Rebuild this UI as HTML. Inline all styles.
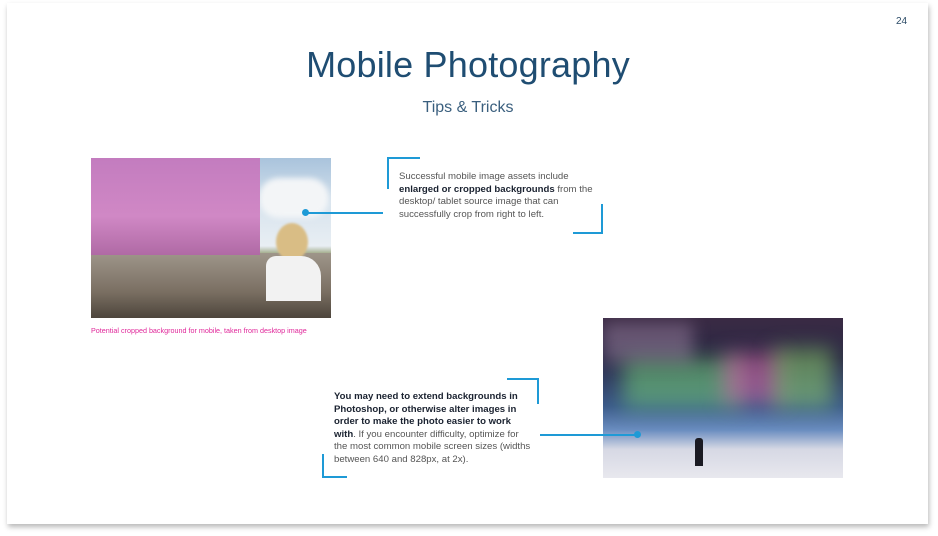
<!DOCTYPE html><html><head><style>
body{margin:0;width:938px;height:536px;background:#fff;overflow:hidden;font-family:"Liberation Sans",sans-serif;position:relative}
.card{position:absolute;left:7px;top:3px;width:921px;height:521px;background:#fff;box-shadow:1px 3px 5px rgba(0,0,0,.28)}
.a{position:absolute}
.t{color:#555;font-size:9.6px;line-height:12.6px;white-space:nowrap}
b{color:#1a2230}
.ln{position:absolute;background:#1e9ad6}
</style></head><body>
<div class="card"></div>
<div class="a" style="left:896px;top:16px;font-size:10px;color:#2a4a66">24</div>
<div class="a" style="left:0;width:936px;top:44px;text-align:center;font-size:36px;color:#1f4d72;letter-spacing:0.2px">Mobile Photography</div>
<div class="a" style="left:0;width:936px;top:99px;text-align:center;font-size:16px;color:#3a5f7e">Tips &amp; Tricks</div>

<div class="a" style="left:91px;top:158px;width:240px;height:160px;overflow:hidden;background:linear-gradient(#a9c3dc,#d8e4ee 30%,#e8eef3 55%,#7f8a55 62%,#6b7a40 70%)">
 <div class="a" style="left:168px;top:20px;width:70px;height:40px;background:#f3f5f7;border-radius:30px;filter:blur(3px)"></div>
 <div class="a" style="left:0;top:95px;width:240px;height:65px;background:linear-gradient(#9e968a,#7a6f62 60%,#4d453c)"></div>
 <div class="a" style="left:185px;top:65px;width:32px;height:38px;background:#d9bd85;border-radius:50%;filter:blur(1px)"></div>
 <div class="a" style="left:175px;top:98px;width:55px;height:45px;background:#f2f2f2;border-radius:10px 20px 0 0"></div>
 <div class="a" style="left:0;top:0;width:169px;height:97px;background:linear-gradient(#c37cbf,#d088c5 60%,#b06aa5)"></div>
</div>
<div class="a" style="left:91px;top:326px;font-size:7.2px;color:#e0279a">Potential cropped background for mobile, taken from desktop image</div>

<div class="ln" style="left:306px;top:212px;width:77px;height:1.5px"></div>
<div class="a" style="left:302px;top:209px;width:7px;height:7px;border-radius:50%;background:#1e9ad6"></div>
<div class="ln" style="left:387px;top:157px;width:33px;height:1.5px"></div>
<div class="ln" style="left:387px;top:157px;width:1.5px;height:32px"></div>
<div class="ln" style="left:601px;top:204px;width:1.5px;height:30px"></div>
<div class="ln" style="left:573px;top:232px;width:30px;height:1.5px"></div>
<div class="a t" style="left:399px;top:171px">Successful mobile image assets include<br><b>enlarged or cropped backgrounds</b> from the<br>desktop/ tablet source image that can<br>successfully crop from right to left.</div>

<div class="a" style="left:603px;top:318px;width:240px;height:160px;overflow:hidden;background:linear-gradient(#3a2a44,#2a2845 25%,#3b5a8a 55%,#6a8dc0 70%,#d6d8e4 82%,#e8e8ee)">
 <div class="a" style="left:20px;top:40px;width:120px;height:50px;background:rgba(120,220,120,.5);filter:blur(10px)"></div>
 <div class="a" style="left:120px;top:35px;width:60px;height:50px;background:rgba(220,100,170,.55);filter:blur(10px)"></div>
 <div class="a" style="left:170px;top:30px;width:60px;height:60px;background:rgba(150,220,110,.5);filter:blur(10px)"></div>
 <div class="a" style="left:0;top:5px;width:90px;height:40px;background:rgba(200,170,200,.35);filter:blur(8px)"></div>
 <div class="a" style="left:92px;top:120px;width:8px;height:28px;background:#1a1a22;border-radius:3px 3px 0 0"></div>
</div>
<div class="ln" style="left:540px;top:434px;width:98px;height:1.5px"></div>
<div class="a" style="left:634px;top:431px;width:7px;height:7px;border-radius:50%;background:#1e9ad6"></div>
<div class="ln" style="left:507px;top:378px;width:31px;height:1.5px"></div>
<div class="ln" style="left:537px;top:378px;width:1.5px;height:26px"></div>
<div class="ln" style="left:322px;top:454px;width:1.5px;height:24px"></div>
<div class="ln" style="left:322px;top:476px;width:25px;height:1.5px"></div>
<div class="a t" style="left:334px;top:391px"><b>You may need to extend backgrounds in<br>Photoshop, or otherwise alter images in<br>order to make the photo easier to work<br>with</b>. If you encounter difficulty, optimize for<br>the most common mobile screen sizes (widths<br>between 640 and 828px, at 2x).</div>
</body></html>
